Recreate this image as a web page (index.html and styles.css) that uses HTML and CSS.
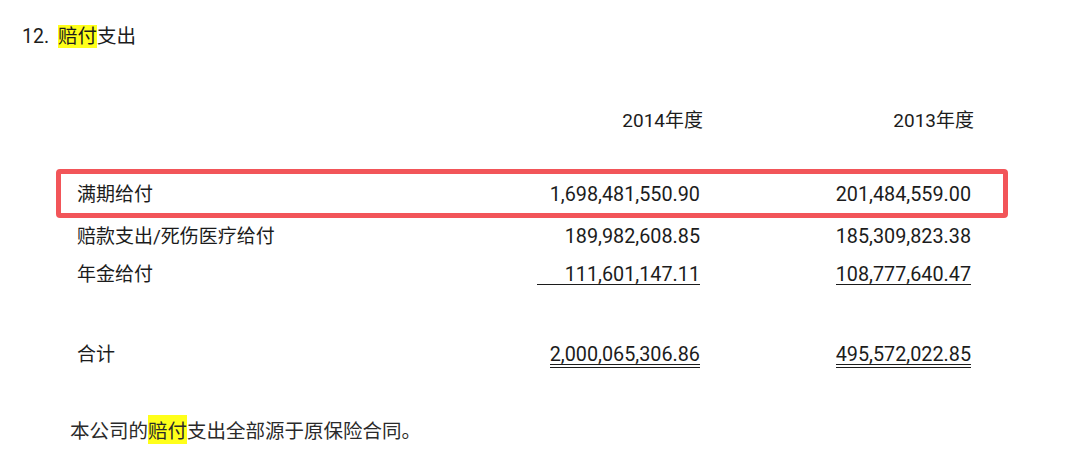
FILE: index.html
```html
<!DOCTYPE html>
<html lang="zh">
<head>
<meta charset="utf-8">
<link rel="stylesheet" href="styles.css">
</head>
<body>
<div class="title"><span class="no">12.</span> <span class="mark">赔付</span>支出</div>
<div class="row head">
  <div class="label"></div>
  <div class="num">2014年度</div>
  <div class="num">2013年度</div>
</div>
<div class="row hl">
  <div class="label">满期给付</div>
  <div class="num">1,698,481,550.90</div>
  <div class="num">201,484,559.00</div>
</div>
<div class="row r2">
  <div class="label">赔款支出/死伤医疗给付</div>
  <div class="num">189,982,608.85</div>
  <div class="num">185,309,823.38</div>
</div>
<div class="row r3">
  <div class="label">年金给付</div>
  <div class="num"><span class="ul wide">111,601,147.11</span></div>
  <div class="num"><span class="ul">108,777,640.47</span></div>
</div>
<div class="row total">
  <div class="label">合计</div>
  <div class="num"><span class="dul">2,000,065,306.86</span></div>
  <div class="num"><span class="dul">495,572,022.85</span></div>
</div>
<p class="note">本公司的<span class="mark">赔付</span>支出全部源于原保险合同。</p>
</body>
</html>
```
FILE: styles.css
```css
html, body {
  margin: 0;
  padding: 0;
  background: #ffffff;
}
body {
  font-family: Roboto, "Noto Sans CJK SC", sans-serif;
  color: #1c1c1c;
  font-size: 19px;
  width: 1080px;
  height: 475px;
  overflow: hidden;
}
.title {
  padding: 26px 0 0 22px;
  line-height: 22px;
  font-size: 19.5px;
}
.title .no {
  margin-right: 4px;
}
.mark {
  background: #ffff1a;
}
.row {
  display: grid;
  grid-template-columns: 1fr 253px 271px;
  margin-left: 56px;
  width: 952px;
  box-sizing: border-box;
  border-left: 5px solid transparent;
  border-right: 5px solid transparent;
  padding: 0 32px 0 16px;
  line-height: 26px;
}
.num {
  text-align: right;
  font-size: 19.8px;
}
.head {
  margin-top: 60px;
}
.head .num {
  margin-right: -3px;
  font-size: 19px;
}
.hl {
  margin-top: 35px;
  border: 5px solid #f25559;
  border-radius: 4px;
  padding-top: 8px;
  padding-bottom: 5px;
}
.r2 {
  margin-top: 6px;
}
.r3 {
  margin-top: 12px;
}
.total {
  margin-top: 54px;
}
.ul {
  display: inline-block;
  line-height: 19px;
  border-bottom: 1.5px solid #1c1c1c;
}
.ul.wide {
  padding-left: 28px;
}
.dul {
  display: inline-block;
  line-height: 19px;
  border-bottom: 4px double #1c1c1c;
}
.note {
  margin: 0;
  margin-top: 49px;
  padding-left: 70px;
  line-height: 26px;
  font-family: "Noto Sans CJK SC", sans-serif;
  font-size: 19.5px;
  color: #2a2a2a;
}
```
